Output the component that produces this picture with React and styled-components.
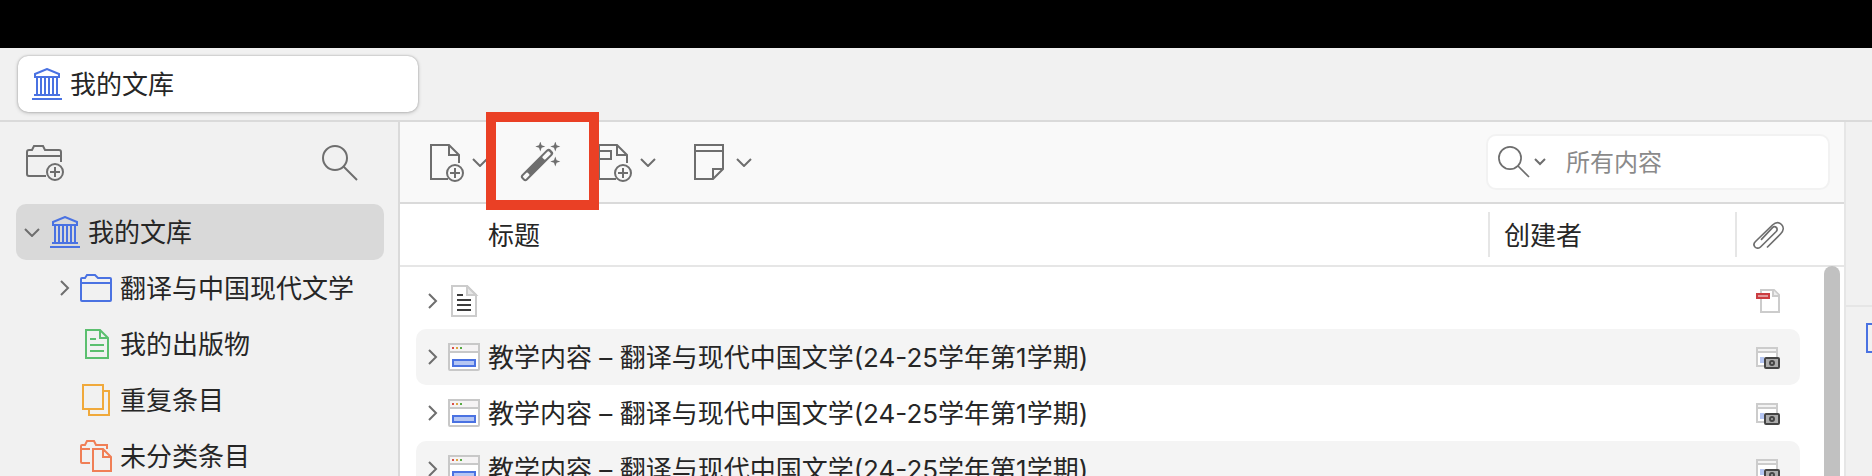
import React from "react";
import styled, { createGlobalStyle } from "styled-components";

const color = {
  text: "#262626",
  icon: "#6e6e6e",
  line: "#dadada",
  lineSoft: "#e6e6e6",
  side: "#f1f1f1",
  toolbar: "#f9f9f9",
  selected: "#d9d9d9",
  stripe: "#f4f4f4",
  blue: "#4a72e2",
  green: "#5bbf6f",
  yellow: "#f0a93b",
  orange: "#f07f56",
  red: "#ea4025",
};

const GlobalStyle = createGlobalStyle`
  *, *::before, *::after { box-sizing: border-box; }
  body {
    margin: 0;
    background: ${color.side};
    color: ${color.text};
    font-family: Inter, "Noto Sans CJK SC", sans-serif;
    font-size: 26px;
    line-height: 36px;
  }
  button, input { font: inherit; color: inherit; }
  svg { display: block; flex: none; }
`;

const Window = styled.div`
  display: flex;
  flex-direction: column;
  height: 100vh;
  overflow: hidden;
`;

const MenuStrip = styled.div`
  flex: none;
  height: 48px;
  background: #000;
`;

const TabBar = styled.div`
  flex: none;
  display: flex;
  padding: 8px 18px;
  border-bottom: 2px solid ${color.line};
`;

const Tab = styled.button`
  display: flex;
  align-items: center;
  gap: 8px;
  width: 400px;
  height: 56px;
  padding: 0 12px;
  border: 0;
  border-radius: 10px;
  background: #fff;
  box-shadow: 0 0 2px rgba(0, 0, 0, 0.3), 0 1px 4px rgba(0, 0, 0, 0.2);
`;

const Label = styled.span`
  padding-top: 2px;
`;

const Panes = styled.div`
  flex: 1;
  display: flex;
  min-height: 0;
`;

const Sidebar = styled.nav`
  flex: none;
  width: 400px;
  border-right: 2px solid ${color.line};
  overflow: hidden;
`;

const SidebarTools = styled.div`
  display: flex;
  align-items: center;
  justify-content: space-between;
  height: 82px;
  padding: 0 40px 0 26px;
`;

const PlainButton = styled.button`
  flex: none;
  display: flex;
  align-items: center;
  gap: ${(p) => p.$gap || 0}px;
  padding: 0;
  border: 0;
  background: none;
  color: ${color.icon};
`;

const Tree = styled.ul`
  margin: 0;
  padding: 0 14px 0 16px;
  list-style: none;
`;

const TreeRow = styled.button`
  display: flex;
  align-items: center;
  gap: 8px;
  width: 100%;
  height: 56px;
  padding: 0 8px 0 ${(p) => 8 + p.$level * 32}px;
  border: 0;
  border-radius: 10px;
  background: ${(p) => (p.$selected ? color.selected : "transparent")};
  white-space: nowrap;
`;

const Twisty = styled.span`
  flex: none;
  display: flex;
  justify-content: flex-end;
  width: 16px;
  color: ${color.icon};
`;

const Main = styled.main`
  flex: 1;
  min-width: 0;
  display: flex;
  flex-direction: column;
  border-right: 2px solid ${color.lineSoft};
  background: #fff;
`;

const Toolbar = styled.div`
  flex: none;
  display: flex;
  align-items: center;
  gap: 32px;
  height: 82px;
  padding: 0 14px 0 30px;
  border-bottom: 2px solid ${color.line};
  background: ${color.toolbar};
`;

const Marked = styled.div`
  position: relative;
`;

const MarkFrame = styled.span`
  position: absolute;
  top: -30px;
  left: -34px;
  width: 113px;
  height: 98px;
  border: 10px solid ${color.red};
  pointer-events: none;
`;

const SearchField = styled.div`
  display: flex;
  align-items: center;
  gap: 20px;
  width: 344px;
  height: 56px;
  margin-left: auto;
  padding: 0 10px;
  border: 2px solid #f2f2f2;
  border-radius: 10px;
  background: #fff;
`;

const SearchInput = styled.input`
  flex: 1;
  min-width: 0;
  padding: 2px 0 0;
  border: 0;
  outline: 0;
  background: none;
  font-size: 24px;
  &::placeholder { color: #8a8a8a; opacity: 1; }
`;

const ListArea = styled.div`
  position: relative;
  flex: 1;
  min-height: 0;
  overflow: hidden;
`;

const ItemTable = styled.table`
  width: 100%;
  table-layout: fixed;
  border-spacing: 0;
  tbody::before { content: ""; display: block; height: 6px; }
`;

const Col = styled.col`
  width: ${(p) => (p.$width ? `${p.$width}px` : "auto")};
`;

const HeadCell = styled.th`
  height: 63px;
  padding: 0;
  border-bottom: 2px solid ${color.lineSoft};
  font-weight: 400;
  text-align: left;
`;

const HeadLabel = styled.div`
  display: flex;
  align-items: center;
  height: 45px;
  padding-left: ${(p) => p.$inset}px;
  border-left: ${(p) => (p.$divided ? `2px solid ${color.lineSoft}` : "0")};
  color: ${(p) => (p.$muted ? color.icon : "inherit")};
`;

const Item = styled.tr`
  --row: ${(p) => (p.$striped ? color.stripe : "transparent")};
`;

const Cell = styled.td`
  height: 56px;
  padding: 0 0 0 ${(p) => p.$inset || 0}px;
  background: var(--row);
  border-radius: ${(p) => p.$round || "0"};
`;

const TitleLine = styled.div`
  display: flex;
  align-items: center;
  gap: 8px;
  white-space: nowrap;
`;

const ScrollThumb = styled.div`
  position: absolute;
  top: 62px;
  right: 4px;
  bottom: -20px;
  width: 16px;
  border-radius: 8px;
  background: #c1c1c1;
`;

const DetailPane = styled.aside`
  flex: none;
  width: 26px;
  overflow: hidden;
`;

const DetailHeader = styled.div`
  height: 185px;
  border-bottom: 2px solid ${color.lineSoft};
`;

const DetailSection = styled.div`
  padding: 16px 0 0 20px;
`;

function Icon({ w, h, stroke = "currentColor", sw = 2, children }) {
  return (
    <svg width={w} height={h} viewBox={`0 0 ${w} ${h}`} fill="none" stroke={stroke} strokeWidth={sw} aria-hidden="true">
      {children}
    </svg>
  );
}

const ChevronDown = () => (
  <Icon w={16} h={10}><path d="M1 2L8 9L15 2" /></Icon>
);
const ChevronSmall = () => (
  <Icon w={12} h={8}><path d="M1 1L6 6L11 1" /></Icon>
);
const ChevronRight = () => (
  <Icon w={12} h={18}><path d="M1 2L8 9L1 16" /></Icon>
);

const LibraryIcon = () => (
  <Icon w={32} h={32} stroke={color.blue}>
    <path d="M5 9V6L17 1L29 6V9ZM7 10V26M11 10V26M15 10V26M19 10V26M23 10V26M27 10V26M4 27H30M2 31H32" />
  </Icon>
);
const FolderIcon = () => (
  <Icon w={32} h={28} stroke={color.blue}>
    <path d="M1 26V5Q1 4 2 4H5L7 1H15L18 4H30Q31 4 31 5V26Q31 27 30 27H2Q1 27 1 26ZM1 9H31" />
  </Icon>
);
const PublicationsIcon = () => (
  <Icon w={32} h={30} stroke={color.green}>
    <path d="M6 1H20L28 9V29H6ZM20 1V9H28M10 10H16M10 16H24M10 22H24" />
  </Icon>
);
const DuplicatesIcon = () => (
  <Icon w={32} h={32} stroke={color.yellow}>
    <path d="M3 1H23V25H3ZM24 7H29V31H9V26" />
  </Icon>
);
const UnfiledIcon = () => (
  <Icon w={32} h={32} stroke={color.orange}>
    <path d="M10 23H2Q1 23 1 22V6Q1 5 2 5H5L7 1H14L16 5H27V9M1 9H10M13 9H23L31 17V31H13ZM23 9V17H31" />
  </Icon>
);
const NewCollectionIcon = () => (
  <Icon w={38} h={36}>
    <path d="M20 31H3Q1 31 1 29V7Q1 5 3 5H6L8 1H17L19 5H33Q35 5 35 7V17M1 11H35" />
    <circle cx="29" cy="27" r="8" />
    <path d="M24 27H34M29 22V32" />
  </Icon>
);
const SearchIcon = () => (
  <Icon w={36} h={36}>
    <circle cx="13" cy="13" r="12" />
    <path d="M21.5 21.5L35 35" />
  </Icon>
);
const SearchFieldIcon = () => (
  <Icon w={32} h={32} sw={1.7}>
    <circle cx="12" cy="12" r="11.1" />
    <path d="M20 20L31 31" />
  </Icon>
);
const NewItemIcon = ({ label }) => (
  <Icon w={34} h={40}>
    <path d="M18 37H1V3H19L29 13V21M19 3V13H29" />
    {label && <path d="M1 9H13V17H1" />}
    <circle cx="25" cy="31" r="8" />
    <path d="M20 31H30M25 26V36" />
  </Icon>
);
const NoteIcon = () => (
  <Icon w={40} h={40}>
    <path d="M7 3H35V27L25 37H7ZM7 9H35M25 37V27H35" />
  </Icon>
);
const star = (x, y) => `M${x} ${y - 5}L${x + 1.3} ${y - 1.3}L${x + 5} ${y}L${x + 1.3} ${y + 1.3}L${x} ${y + 5}L${x - 1.3} ${y + 1.3}L${x - 5} ${y}L${x - 1.3} ${y - 1.3}Z`;
const WandIcon = () => (
  <Icon w={46} h={40} stroke="none">
    <path fill="currentColor" d={star(20.3, 4.5) + star(35.3, 4.5) + star(35.3, 19.5)} />
    <g transform="translate(17 23) rotate(-45)">
      <rect x="-20.5" y="-4" width="41" height="8" rx="3" fill="currentColor" />
      <rect x="9" y="-2" width="9" height="4" rx="1" fill={color.toolbar} />
      <rect x="-18.500" y="-2" width="6.500" height="4" rx="1" fill={color.toolbar} />
    </g>
  </Icon>
);
const PaperclipIcon = () => (
  <Icon w={32} h={28} sw={1.7}>
    <path d="M14 26.500L27.500 13C30.800 9.700 31 6 28.500 3.500C26 1 22.500 1.200 19.500 4L2.500 20.500C.7 22.300 .6 24.500 2 26C3.600 27.600 6 27.500 7.500 26L23.200 10.500C24.400 9.200 24.400 7.500 23.300 6.500C22.200 5.500 20.600 5.600 19.500 6.700L8 18.800" />
  </Icon>
);
const DocumentIcon = () => (
  <Icon w={32} h={32} stroke="#cccccc">
    <path fill="#fff" d="M4 1H19L28 10V31H4Z" />
    <path fill="#e8e8e8" d="M19 1V10H28Z" />
    <path stroke="#3c3c3c" d="M9 10H15M9 15H23M9 20H23M9 25H23" />
  </Icon>
);
const WebPageIcon = () => (
  <Icon w={32} h={28} stroke="#c8c8c8">
    <rect x="1" y="1" width="30" height="26" rx="1" fill="#fff" />
    <path fill="#f5f3f4" d="M1 1H31V9H1Z" />
    <path stroke="#d9504a" d="M4 5H6" />
    <path stroke="#dca53e" d="M8 5H10" />
    <path stroke="#57a944" d="M12 5H14" />
    <rect x="5" y="17" width="22" height="6" stroke={color.blue} fill="#b5c6f3" />
  </Icon>
);
const PdfIcon = () => (
  <Icon w={24} h={24} stroke="#cccccc">
    <path fill="#fff" d="M5 1H18L23 6V23H5Z" />
    <path fill="#eeeeee" d="M17 1V7H23" />
    <rect x="1" y="5" width="12" height="4" stroke="#cb3d41" fill="#e29a9c" />
  </Icon>
);
const SnapshotIcon = () => (
  <Icon w={24} h={24} stroke="#cccccc">
    <rect x="1" y="3" width="20" height="18" fill="#fff" />
    <path fill="#f3f3f3" d="M1 3H21V7H1Z" />
    <path stroke="none" fill="#b5c6f3" d="M4 12H8V18H4Z" />
    <rect x="9" y="13" width="14" height="10" rx="1" stroke="#454545" fill="#acacac" />
    <circle cx="16" cy="18" r="2" stroke="#454545" />
  </Icon>
);
const InfoIcon = () => (
  <Icon w={30} h={30} stroke={color.blue}><path d="M1 1H29V29H1Z" /></Icon>
);

const collections = [
  { name: "我的文库", level: 0, icon: <LibraryIcon />, twisty: <ChevronDown />, selected: true },
  { name: "翻译与中国现代文学", level: 1, icon: <FolderIcon />, twisty: <ChevronRight /> },
  { name: "我的出版物", level: 1, icon: <PublicationsIcon /> },
  { name: "重复条目", level: 1, icon: <DuplicatesIcon /> },
  { name: "未分类条目", level: 1, icon: <UnfiledIcon /> },
];

const courseTitle = "教学内容 – 翻译与现代中国文学(24-25学年第1学期)";
const items = [
  { id: 1, title: "", icon: <DocumentIcon />, attachment: <PdfIcon /> },
  { id: 2, title: courseTitle, icon: <WebPageIcon />, attachment: <SnapshotIcon /> },
  { id: 3, title: courseTitle, icon: <WebPageIcon />, attachment: <SnapshotIcon /> },
  { id: 4, title: courseTitle, icon: <WebPageIcon />, attachment: <SnapshotIcon /> },
];

export default function App() {
  return (
    <Window>
      <GlobalStyle />
      <MenuStrip />
      <TabBar role="tablist">
        <Tab role="tab" aria-selected="true"><LibraryIcon /><Label>我的文库</Label></Tab>
      </TabBar>
      <Panes>
        <Sidebar>
          <SidebarTools>
            <PlainButton aria-label="新建分类"><NewCollectionIcon /></PlainButton>
            <PlainButton aria-label="筛选分类"><SearchIcon /></PlainButton>
          </SidebarTools>
          <Tree>
            {collections.map((c) => (
              <li key={c.name}>
                <TreeRow $level={c.level} $selected={c.selected}>
                  <Twisty>{c.twisty}</Twisty>
                  {c.icon}
                  <Label>{c.name}</Label>
                </TreeRow>
              </li>
            ))}
          </Tree>
        </Sidebar>
        <Main>
          <Toolbar>
            <PlainButton $gap={8} aria-label="新建条目"><NewItemIcon /><ChevronDown /></PlainButton>
            <Marked>
              <PlainButton aria-label="通过标识符添加条目"><WandIcon /></PlainButton>
              <MarkFrame />
            </Marked>
            <PlainButton $gap={8} aria-label="添加附件"><NewItemIcon label /><ChevronDown /></PlainButton>
            <PlainButton $gap={8} aria-label="新建笔记"><NoteIcon /><ChevronDown /></PlainButton>
            <SearchField>
              <PlainButton $gap={4} aria-label="搜索范围"><SearchFieldIcon /><ChevronSmall /></PlainButton>
              <SearchInput type="text" placeholder="所有内容" aria-label="搜索" />
            </SearchField>
          </Toolbar>
          <ListArea>
            <ItemTable>
              <colgroup>
                <Col $width={16} />
                <Col />
                <Col $width={247} />
                <Col $width={65} />
                <Col $width={44} />
              </colgroup>
              <thead>
                <tr>
                  <HeadCell as="td" />
                  <HeadCell><HeadLabel $inset={72}><Label>标题</Label></HeadLabel></HeadCell>
                  <HeadCell><HeadLabel $divided $inset={14}><Label>创建者</Label></HeadLabel></HeadCell>
                  <HeadCell aria-label="附件"><HeadLabel $divided $muted $inset={16}><PaperclipIcon /></HeadLabel></HeadCell>
                  <HeadCell as="td" />
                </tr>
              </thead>
              <tbody>
                {items.map((item, i) => (
                  <Item key={item.id} $striped={i % 2 === 1}>
                    <td />
                    <Cell $inset={12} $round="10px 0 0 10px">
                      <TitleLine>
                        <PlainButton aria-label="展开"><ChevronRight /></PlainButton>
                        {item.icon}
                        <Label>{item.title}</Label>
                      </TitleLine>
                    </Cell>
                    <Cell />
                    <Cell $inset={21} $round="0 10px 10px 0">{item.attachment}</Cell>
                    <td />
                  </Item>
                ))}
              </tbody>
            </ItemTable>
            <ScrollThumb />
          </ListArea>
        </Main>
        <DetailPane>
          <DetailHeader />
          <DetailSection><InfoIcon /></DetailSection>
        </DetailPane>
      </Panes>
    </Window>
  );
}
